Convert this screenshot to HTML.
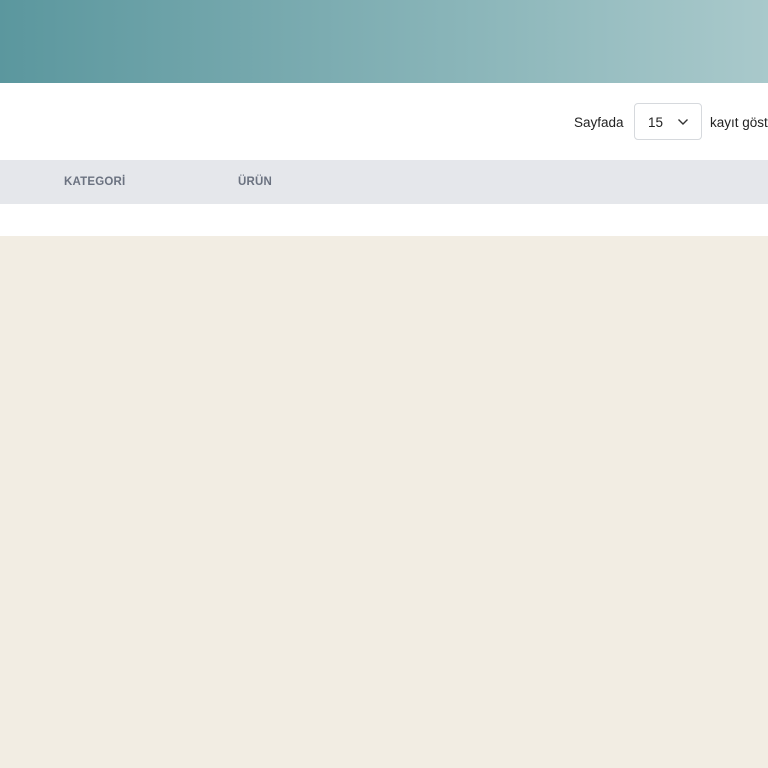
<!DOCTYPE html>
<html><head><meta charset="utf-8"><style>
*{margin:0;padding:0;box-sizing:border-box}
html,body{width:768px;height:768px;overflow:hidden}
body{background:#f2ede3;font-family:"Liberation Sans",sans-serif;position:relative}
.hdr{position:absolute;left:0;top:0;width:768px;height:83px;background:linear-gradient(90deg,#5b979e,#a9c9cb)}
.bar{position:absolute;left:0;top:83px;width:768px;height:77px;background:#fff}
.t{position:absolute;top:115px;font-size:13.5px;color:#222;white-space:nowrap;overflow:hidden}
.sel{position:absolute;left:634px;top:103px;width:68px;height:37px;border:1px solid #d6d9dd;border-radius:4px;background:#fff}
.th{position:absolute;left:0;top:160px;width:768px;height:44px;background:#e5e7eb}
.th span{position:absolute;top:16px;font-size:11.5px;font-weight:bold;color:#6b7280;letter-spacing:.2px}
.w{position:absolute;left:0;top:204px;width:768px;height:32px;background:#fff}
</style></head><body>
<div class="hdr"></div>
<div class="bar"></div>
<div class="t" style="left:574px">Sayfada</div>
<div class="sel"><span style="position:absolute;left:13px;top:11px;font-size:13.5px;color:#222">15</span>
<svg style="position:absolute;left:42px;top:14px" width="12" height="8" viewBox="0 0 12 8"><path d="M1.5 1.5L6 6l4.5-4.5" fill="none" stroke="#333" stroke-width="1.4"/></svg></div>
<div class="t" style="left:710px;width:58px">kayıt gösteriliyor</div>
<div class="th"><span style="left:64px">KATEGORİ</span><span style="left:238px">ÜRÜN</span></div>
<div class="w"></div>
</body></html>
